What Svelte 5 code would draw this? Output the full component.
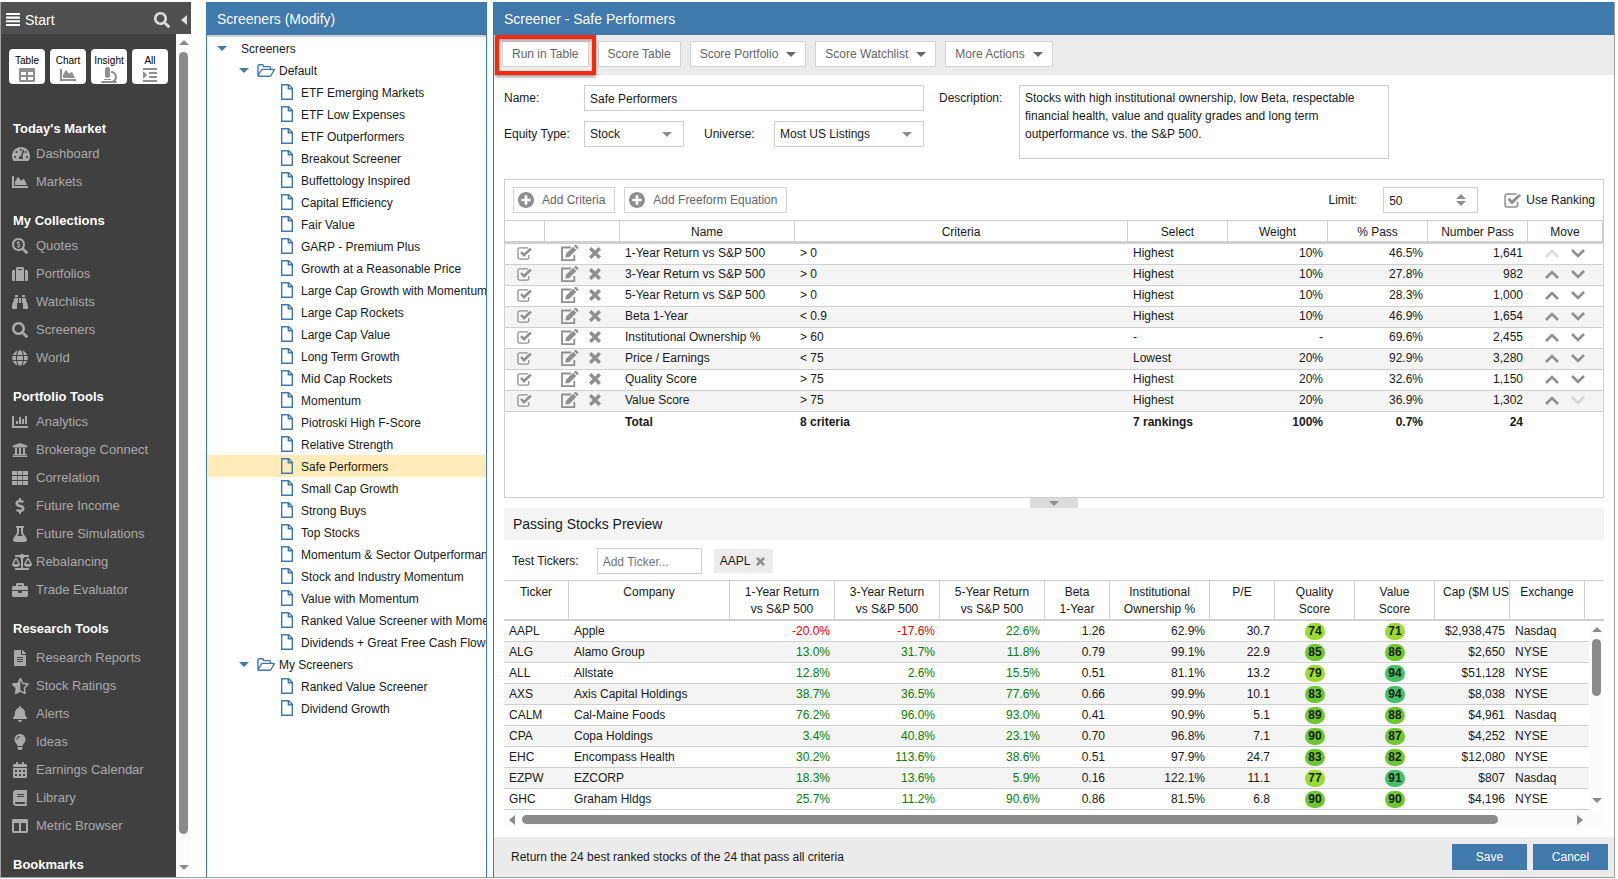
<script>
	// box is the svg viewBox, the paths are filled unless the icon has a stroke width
	const icons = {
		search: {
			box: '0 0 512 512',
			d: 'M505 442.7L405.3 343c-4.5-4.5-10.6-7-17-7H372c27.6-35.3 44-79.7 44-128C416 93.1 322.9 0 208 0S0 93.1 0 208s93.1 208 208 208c48.3 0 92.7-16.4 128-44v16.3c0 6.4 2.5 12.5 7 17l99.7 99.7c9.4 9.4 24.6 9.4 33.9 0l28.3-28.3c9.4-9.4 9.4-24.6.1-34zM208 336c-70.7 0-128-57.2-128-128 0-70.7 57.2-128 128-128 70.7 0 128 57.2 128 128 0 70.7-57.2 128-128 128z'
		},
		quotes: {
			box: '0 0 512 512',
			d: 'M505 442.7L405.3 343c-4.5-4.5-10.6-7-17-7H372c27.6-35.3 44-79.7 44-128C416 93.1 322.9 0 208 0S0 93.1 0 208s93.1 208 208 208c48.3 0 92.7-16.4 128-44v16.3c0 6.4 2.5 12.5 7 17l99.7 99.7c9.4 9.4 24.6 9.4 33.9 0l28.3-28.3c9.4-9.4 9.4-24.6.1-34zM208 352c-79.5 0-144-64.5-144-144S128.5 64 208 64s144 64.5 144 144-64.5 144-144 144zM192 96h32v26c14 1 28 6 39 15l-20 26c-9-7-18-10-28-10h-14c-18 0-22 22-4 28l36 11c50 16 46 88-9 98v28h-32v-28c-17-1-32-7-44-17l21-27c9 8 20 12 31 12h15c20 0 24-23 5-29l-37-11c-47-15-42-86 9-95z'
		},
		table: {
			box: '0 0 512 512',
			d: 'M464 32H48C21.49 32 0 53.49 0 80v352c0 26.51 21.49 48 48 48h416c26.51 0 48-21.49 48-48V80c0-26.51-21.49-48-48-48zM224 416H64v-96h160v96zm0-160H64v-96h160v96zm224 160H288v-96h160v96zm0-160H288v-96h160v96z'
		},
		area: {
			box: '0 0 512 512',
			d: 'M500 384c6.6 0 12 5.4 12 12v40c0 6.6-5.4 12-12 12H12c-6.6 0-12-5.4-12-12V76c0-6.6 5.4-12 12-12h40c6.6 0 12 5.4 12 12v308h436zM372.7 159.5L288 216l-85.3-113.7c-5.1-6.8-15.5-6.3-19.9 1L96 248v104h384l-89.9-187.8c-3.2-6.5-11.4-8.7-17.4-4.7z'
		},
		microscope: {
			box: '0 0 512 512',
			d: 'M160 320h12v16c0 8.84 7.16 16 16 16h40c8.84 0 16-7.16 16-16v-16h12c17.67 0 32-14.33 32-32V64c0-17.67-14.33-32-32-32V16c0-8.84-7.16-16-16-16h-64c-8.84 0-16 7.16-16 16v16c-17.67 0-32 14.33-32 32v224c0 17.67 14.33 32 32 32zm304 128h-1.29C493.24 413.99 512 369.2 512 320c0-105.88-86.12-192-192-192v64c70.58 0 128 57.42 128 128s-57.42 128-128 128H48c-26.51 0-48 21.49-48 48 0 8.84 7.16 16 16 16h480c8.84 0 16-7.16 16-16 0-26.51-21.49-48-48-48zm-360-32h208c4.42 0 8-3.58 8-8v-16c0-4.42-3.58-8-8-8H104c-4.42 0-8 3.58-8 8v16c0 4.42 3.58 8 8 8z'
		},
		indent: {
			box: '0 0 448 512',
			d: 'M27.31 363.3l96-96a16 16 0 0 0 0-22.62l-96-96C17.27 138.66 0 145.78 0 160v192c0 14.31 17.33 21.3 27.31 11.3zM0 416h448v64H0zM192 288h256v64H192zM192 160h256v64H192zM0 32h448v64H0z'
		},
		dashboard: {
			box: '0 0 576 512',
			d: 'M288 32C128.94 32 0 160.94 0 320c0 52.8 14.25 102.26 39.06 144.8 5.61 9.62 16.3 15.2 27.44 15.2h443c11.14 0 21.83-5.58 27.44-15.2C561.75 422.26 576 372.8 576 320c0-159.06-128.94-288-288-288zm0 64c14.71 0 26.58 10.13 30.32 23.65-1.11 2.26-2.64 4.23-3.45 6.67l-9.22 27.67c-5.13 3.49-10.97 6.01-17.64 6.01-17.67 0-32-14.33-32-32S270.33 96 288 96zM96 384c-17.67 0-32-14.33-32-32s14.33-32 32-32 32 14.33 32 32-14.33 32-32 32zm48-160c-17.67 0-32-14.33-32-32s14.33-32 32-32 32 14.33 32 32-14.33 32-32 32zm246.77-72.41l-61.33 184C343.13 347.33 352 364.54 352 384c0 11.72-3.38 22.55-8.88 32H232.88c-5.5-9.45-8.88-20.28-8.88-32 0-33.94 26.5-61.43 59.9-63.59l61.34-184.01c4.17-12.56 17.73-19.45 30.36-15.17 12.57 4.19 19.35 17.79 15.17 30.36zm14.66 57.2l15.52-46.55c3.47-1.29 7.13-2.23 11.05-2.23 17.67 0 32 14.33 32 32s-14.33 32-32 32c-11.38-.01-20.89-6.28-26.57-15.22zM480 384c-17.67 0-32-14.33-32-32s14.33-32 32-32 32 14.33 32 32-14.33 32-32 32z'
		},
		suitcase: {
			box: '0 0 512 512',
			d: 'M128 480h256V80c0-26.5-21.5-48-48-48H176c-26.5 0-48 21.5-48 48v400zm64-384h128v32H192V96zm320 80v256c0 26.5-21.5 48-48 48h-48V128h48c26.5 0 48 21.5 48 48zM96 480H48c-26.5 0-48-21.5-48-48V176c0-26.5 21.5-48 48-48h48v352z'
		},
		binoculars: {
			box: '0 0 512 512',
			d: 'M416 48c0-8.84-7.16-16-16-16h-64c-8.84 0-16 7.16-16 16v48h96V48zM63.91 159.99C61.4 253.84 3.46 274.22 0 404v44c0 17.67 14.33 32 32 32h96c17.67 0 32-14.33 32-32V288h32V128H95.84c-17.63 0-31.45 14.37-31.93 31.99zm384.18 0c-.48-17.62-14.3-31.99-31.93-31.99H320v160h32v160c0 17.67 14.33 32 32 32h96c17.67 0 32-14.33 32-32v-44c-3.46-129.78-61.4-150.16-63.91-244.01zM176 32h-64c-8.84 0-16 7.16-16 16v48h96V48c0-8.84-7.16-16-16-16zm48 256h64V128h-64v160z'
		},
		globe: {
			box: '0 0 496 512',
			d: 'M336.5 160C322 70.7 287.8 8 248 8s-74 62.7-88.5 152h177zM152 256c0 22.2 1.2 43.5 3.3 64h185.3c2.1-20.5 3.3-41.8 3.3-64s-1.2-43.5-3.3-64H155.3c-2.1 20.5-3.3 41.8-3.3 64zm324.7-96c-28.6-67.9-86.5-120.4-158-141.6 24.4 33.8 41.2 84.7 50 141.6h108zM177.2 18.4C105.8 39.6 47.8 92.1 19.3 160h108c8.7-56.9 25.5-107.8 49.9-141.6zM487.4 192H372.7c2.1 21 3.3 42.5 3.3 64s-1.2 43-3.3 64h114.6c5.5-20.5 8.6-41.8 8.6-64s-3.1-43.5-8.5-64zM120 256c0-21.5 1.2-43 3.3-64H8.6C3.2 212.5 0 233.8 0 256s3.2 43.5 8.6 64h114.6c-2-21-3.2-42.5-3.2-64zm39.5 96c14.5 89.3 48.7 152 88.5 152s74-62.7 88.5-152h-177zm159.3 141.6c71.4-21.2 129.4-73.7 158-141.6h-108c-8.8 56.9-25.6 107.8-50 141.6zM19.3 352c28.6 67.9 86.5 120.4 158 141.6-24.4-33.8-41.2-84.7-50-141.6h-108z'
		},
		bars: {
			box: '0 0 512 512',
			d: 'M0 64h64v320h448v64H0zM128 224h64v96h-64zM224 96h64v224h-64zM320 160h64v160h-64zM416 64h64v256h-64z'
		},
		bank: {
			box: '0 0 512 512',
			d: 'M496 128v16a8 8 0 0 1-8 8h-24v12c0 6.627-5.373 12-12 12H60c-6.627 0-12-5.373-12-12v-12H24a8 8 0 0 1-8-8v-16a8 8 0 0 1 4.941-7.392l232-88a7.996 7.996 0 0 1 6.118 0l232 88A8 8 0 0 1 496 128zm-24 304H40c-13.255 0-24 10.745-24 24v16a8 8 0 0 0 8 8h464a8 8 0 0 0 8-8v-16c0-13.255-10.745-24-24-24zM96 192v192H60c-6.627 0-12 5.373-12 12v20h416v-20c0-6.627-5.373-12-12-12h-36V192h-64v192h-64V192h-64v192h-64V192H96z'
		},
		grid: {
			box: '0 0 16 16',
			d: 'M0 1h5v4H0zM5.600 1h4.800v4H5.600zM11 1h5v4h-5zM0 6h5v4H0zM5.600 6h4.800v4H5.600zM11 6h5v4h-5zM0 11h5v4H0zM5.600 11h4.800v4H5.600zM11 11h5v4h-5z'
		},
		dollar: {
			box: '0 0 288 512',
			d: 'M209.2 233.4l-108-31.6C88.7 198.2 80 186.5 80 173.5c0-16.3 13.2-29.5 29.5-29.5h66.3c12.2 0 24.2 3.7 34.2 10.5 6.1 4.1 14.3 3.1 19.5-2l34.8-34c7.1-6.9 6.1-18.4-1.8-24.5C238 74.8 207.4 64.1 176 64V16c0-8.8-7.2-16-16-16h-32c-8.8 0-16 7.2-16 16v48h-2.5C45.8 64-5.4 118.7.5 183.6c4.2 46.1 39.4 83.6 83.8 96.6l102.5 30c12.5 3.7 21.2 15.3 21.2 28.3 0 16.3-13.2 29.5-29.5 29.5h-66.3C100 368 88 364.3 78 357.5c-6.1-4.1-14.3-3.1-19.5 2l-34.8 34c-7.1 6.9-6.1 18.4 1.8 24.5 24.5 19.2 55.1 29.9 86.5 30v48c0 8.8 7.2 16 16 16h32c8.8 0 16-7.2 16-16v-48.2c46.6-.9 90.3-28.6 105.7-72.7 21.5-61.6-14.6-124.8-72.5-141.7z'
		},
		flask: {
			box: '0 0 448 512',
			d: 'M437.2 403.5L320 215V64h8c13.3 0 24-10.7 24-24V24c0-13.3-10.7-24-24-24H120c-13.3 0-24 10.7-24 24v16c0 13.3 10.7 24 24 24h8v151L10.8 403.5C-18.5 450.6 15.3 512 70.9 512h306.2c55.7 0 89.4-61.5 60.1-108.5zM137.9 320l48.2-77.6c3.7-5.2 5.8-11.6 5.8-18.4V64h64v160c0 6.9 2.2 13.2 5.8 18.4l48.2 77.6h-172z'
		},
		scale: {
			box: '0 0 640 512',
			d: 'M256 336h-.02c0-16.18 1.34-8.73-85.05-181.51-17.65-35.29-68.19-35.36-85.87 0C-2.06 328.75.02 320.33.02 336H0c0 44.18 57.31 80 128 80s128-35.82 128-80zM128 176l72 144H56l72-144zm511.98 160c0-16.18 1.34-8.73-85.05-181.51-17.65-35.29-68.19-35.36-85.87 0-87.12 174.26-85.04 165.84-85.04 181.51H384c0 44.18 57.31 80 128 80s128-35.82 128-80h-.02zM440 320l72-144 72 144H440zm88 128H352V153.25c23.51-10.29 41.16-31.48 46.39-57.25H528c8.84 0 16-7.16 16-16V48c0-8.84-7.16-16-16-16H383.64C369.04 12.68 346.09 0 320 0s-49.04 12.68-63.64 32H112c-8.84 0-16 7.16-16 16v32c0 8.84 7.16 16 16 16h129.61c5.23 25.76 22.87 46.96 46.39 57.25V448H112c-8.84 0-16 7.16-16 16v32c0 8.84 7.16 16 16 16h416c8.84 0 16-7.16 16-16v-32c0-8.84-7.16-16-16-16z'
		},
		briefcase: {
			box: '0 0 512 512',
			d: 'M320 336c0 8.84-7.16 16-16 16h-96c-8.84 0-16-7.16-16-16v-48H0v144c0 25.6 22.4 48 48 48h416c25.6 0 48-22.4 48-48V288H320v48zm144-208h-80V80c0-25.6-22.4-48-48-48H176c-25.6 0-48 22.4-48 48v48H48c-25.6 0-48 22.4-48 48v80h512v-80c0-25.6-22.4-48-48-48zm-144 0H192V96h128v32z'
		},
		report: {
			box: '0 0 384 512',
			d: 'M224 136V0H24C10.7 0 0 10.7 0 24v464c0 13.3 10.7 24 24 24h336c13.3 0 24-10.7 24-24V160H248c-13.2 0-24-10.8-24-24zM288 384H96v-32h192zM288 320H96v-32h192zM288 256H96v-32h192zM384 121.9v6.1H256V0h6.1c6.4 0 12.5 2.5 17 7l97.9 98c4.5 4.5 7 10.6 7 16.9z'
		},
		star: {
			box: '0 0 536 512',
			d: 'M508.55 171.51L362.18 150.2 296.77 17.81C290.89 5.98 279.42 0 267.95 0c-11.4 0-22.79 5.9-28.69 17.81l-65.43 132.38-146.38 21.29c-26.25 3.8-36.77 36.09-17.74 54.59l105.89 103-25.06 145.48C86.98 495.33 103.57 512 122.15 512c4.93 0 10-1.17 14.87-3.75l130.95-68.68 130.94 68.7c4.86 2.55 9.92 3.71 14.83 3.71 18.6 0 35.22-16.61 31.66-37.4l-25.03-145.49 105.91-102.98c19.04-18.5 8.52-50.8-17.73-54.6zm-121.74 123.2l-18.12 17.62 4.28 24.88 19.52 113.45-102.13-53.59-22.38-11.74.03-317.19 51.03 103.29 11.18 22.63 25.01 3.64 114.23 16.63-82.65 80.38z'
		},
		bell: {
			box: '0 0 448 512',
			d: 'M224 512c35.32 0 63.97-28.65 63.97-64H160.03c0 35.35 28.65 64 63.97 64zm215.39-149.71c-19.32-20.76-55.47-51.99-55.47-154.29 0-77.7-54.48-139.9-127.94-155.16V32c0-17.67-14.32-32-31.98-32s-31.98 14.33-31.98 32v20.84C118.56 68.1 64.08 130.3 64.08 208c0 102.3-36.15 133.53-55.47 154.29-6 6.45-8.66 14.16-8.61 21.71.11 16.4 12.98 32 32.1 32h383.8c19.12 0 32-15.6 32.1-32 .05-7.55-2.61-15.27-8.61-21.71z'
		},
		bulb: {
			box: '0 0 352 512',
			d: 'M96.06 454.35c.01 6.29 1.87 12.45 5.36 17.69l17.09 25.69a31.99 31.99 0 0 0 26.64 14.28h61.71a31.99 31.99 0 0 0 26.64-14.28l17.09-25.69a31.989 31.989 0 0 0 5.36-17.69l.04-38.35H96.01l.05 38.35zM0 176c0 44.37 16.45 84.85 43.56 115.78 16.52 18.85 42.36 58.23 52.21 91.45.04.26.07.52.11.78h160.24c.04-.26.07-.51.11-.78 9.85-33.22 35.69-72.6 52.21-91.45C335.55 260.85 352 220.37 352 176 352 78.61 272.91-.3 175.45 0 73.44.31 0 82.97 0 176zm176-80c-44.11 0-80 35.89-80 80 0 8.84-7.16 16-16 16s-16-7.16-16-16c0-61.76 50.24-112 112-112 8.84 0 16 7.16 16 16s-7.16 16-16 16z'
		},
		calendar: {
			box: '0 0 448 512',
			d: 'M0 464c0 26.5 21.5 48 48 48h352c26.5 0 48-21.5 48-48V192H0v272zM320 256h64v64h-64zM320 384h64v64h-64zM192 256h64v64h-64zM192 384h64v64h-64zM64 256h64v64H64zM64 384h64v64H64zM400 64h-48V16c0-8.8-7.2-16-16-16h-32c-8.8 0-16 7.2-16 16v48H160V16c0-8.8-7.2-16-16-16h-32c-8.8 0-16 7.2-16 16v48H48C21.5 64 0 85.5 0 112v48h448v-48c0-26.5-21.5-48-48-48z'
		},
		book: {
			box: '0 0 448 512',
			d: 'M448 360V24c0-13.3-10.7-24-24-24H96C43 0 0 43 0 96v320c0 53 43 96 96 96h328c13.3 0 24-10.7 24-24v-16c0-7.5-3.5-14.3-8.9-18.7-4.2-15.4-4.2-59.3 0-74.7 5.4-4.3 8.9-11.1 8.9-18.6zM128 128h224v32H128zM128 192h224v32H128zM381.4 448H96c-17.7 0-32-14.3-32-32 0-17.6 14.4-32 32-32h285.4c-1.9 17.1-1.9 46.9 0 64z'
		},
		columns: {
			box: '0 0 512 512',
			d: 'M464 32H48C21.49 32 0 53.49 0 80v352c0 26.51 21.49 48 48 48h416c26.51 0 48-21.49 48-48V80c0-26.51-21.49-48-48-48zM224 416H64V160h160v256zm224 0H288V160h160v256z'
		},
		plus: {
			box: '8 8 496 496',
			d: 'M256 8C119 8 8 119 8 256s111 248 248 248 248-111 248-248S393 8 256 8zm144 276c0 6.6-5.4 12-12 12h-92v92c0 6.6-5.4 12-12 12h-56c-6.6 0-12-5.4-12-12v-92h-92c-6.6 0-12-5.4-12-12v-56c0-6.6 5.4-12 12-12h92v-92c0-6.6 5.4-12 12-12h56c6.6 0 12 5.4 12 12v92h92c6.6 0 12 5.4 12 12v56z'
		},
		menu: { box: '0 0 14 13', d: 'M0 0h14v2H0zM0 3.6h14v2.200H0zM0 7.300h14v2H0zM0 11h14v2H0z' },
		down: { box: '0 0 10 5', d: 'M0 0h10L5 5z' },
		up: { box: '0 0 10 5', d: 'M0 5h10L5 0z' },
		left: { box: '0 0 6 10', d: 'M6 0v10L0 5z' },
		right: { box: '0 0 6 10', d: 'M0 0v10l6-5z' },
		file: { box: '0 0 12 16', stroke: 1.4, d: 'M.7.7h7l3.600 3.600v11H.7zM7.300.7v4h4' },
		folder: {
			box: '0 0 18 13',
			stroke: 1.4,
			d: 'M1 11V1.7Q1 .8 2 .8h3.5q1 0 1 1v.8h6q1 0 1 1v1.8M1.2 11.5L4.5 6q.4-.6 1.2-.6H17q.5 0 .2.5L14 11.5q-.4.7-1.2.7H1.6q-.7 0-.4-.7z'
		},
		check: {
			box: '0 0 16 14',
			stroke: 1.4,
			d: 'M12.7 8.5V11q0 2-2 2H3q-2 0-2-2V3q0-2 2-2h7.7q.7 0 1.200.3',
			fill: 'M3.400 6.200L5.100 4.500l2.400 2.300L14 .9l1.900 1.700-8.400 8.100z'
		},
		edit: {
			box: '0 0 18 16',
			stroke: 1.8,
			d: 'M10 2.5H1v12.6h12.3V10',
			fill: 'M5 8.800l7.200-7 3.200 3.200-7.200 7-3.800.6zM13 1.100l1-1q.7-.6 1.300 0l1.900 1.900q.6.6 0 1.300l-1 1z'
		},
		times: { box: '0 0 11 11', stroke: 3.2, d: 'M1.100 1.100l8.800 8.800M9.900 1.100l-8.800 8.800' },
		moveUp: { box: '0 0 14 9', stroke: 2.6, d: 'M1 8l6-6 6 6' },
		moveDown: { box: '0 0 14 9', stroke: 2.6, d: 'M1 1l6 6 6-6' }
	};

	const views = [
		['Table', 'table'],
		['Chart', 'area'],
		['Insight', 'microscope'],
		['All', 'indent']
	];

	const sections = [
		{
			title: "Today's Market",
			items: [
				['Dashboard', 'dashboard'],
				['Markets', 'area']
			]
		},
		{
			title: 'My Collections',
			items: [
				['Quotes', 'quotes'],
				['Portfolios', 'suitcase'],
				['Watchlists', 'binoculars'],
				['Screeners', 'search'],
				['World', 'globe']
			]
		},
		{
			title: 'Portfolio Tools',
			items: [
				['Analytics', 'bars'],
				['Brokerage Connect', 'bank'],
				['Correlation', 'grid'],
				['Future Income', 'dollar'],
				['Future Simulations', 'flask'],
				['Rebalancing', 'scale'],
				['Trade Evaluator', 'briefcase']
			]
		},
		{
			title: 'Research Tools',
			spaced: true,
			items: [
				['Research Reports', 'report'],
				['Stock Ratings', 'star'],
				['Alerts', 'bell'],
				['Ideas', 'bulb'],
				['Earnings Calendar', 'calendar'],
				['Library', 'book'],
				['Metric Browser', 'columns']
			]
		},
		{ title: 'Bookmarks', items: [] }
	];

	const folders = [
		{
			name: 'Default',
			screeners: [
				'ETF Emerging Markets',
				'ETF Low Expenses',
				'ETF Outperformers',
				'Breakout Screener',
				'Buffettology Inspired',
				'Capital Efficiency',
				'Fair Value',
				'GARP - Premium Plus',
				'Growth at a Reasonable Price',
				'Large Cap Growth with Momentum',
				'Large Cap Rockets',
				'Large Cap Value',
				'Long Term Growth',
				'Mid Cap Rockets',
				'Momentum',
				'Piotroski High F-Score',
				'Relative Strength',
				'Safe Performers',
				'Small Cap Growth',
				'Strong Buys',
				'Top Stocks',
				'Momentum & Sector Outperformance',
				'Stock and Industry Momentum',
				'Value with Momentum',
				'Ranked Value Screener with Momentum',
				'Dividends + Great Free Cash Flow'
			]
		},
		{ name: 'My Screeners', screeners: ['Ranked Value Screener', 'Dividend Growth'] }
	];

	// name, criteria, select, weight, % pass, number pass
	const criteria = [
		['1-Year Return vs S&P 500', '> 0', 'Highest', '10%', '46.5%', '1,641'],
		['3-Year Return vs S&P 500', '> 0', 'Highest', '10%', '27.8%', '982'],
		['5-Year Return vs S&P 500', '> 0', 'Highest', '10%', '28.3%', '1,000'],
		['Beta 1-Year', '< 0.9', 'Highest', '10%', '46.9%', '1,654'],
		['Institutional Ownership %', '> 60', '-', '-', '69.6%', '2,455'],
		['Price / Earnings', '< 75', 'Lowest', '20%', '92.9%', '3,280'],
		['Quality Score', '> 75', 'Highest', '20%', '32.6%', '1,150'],
		['Value Score', '> 75', 'Highest', '20%', '36.9%', '1,302']
	];

	// ticker, company, 1/3/5 year returns, beta, inst. ownership, p/e, quality, value, cap, exchange
	const stocks = [
		['AAPL', 'Apple', '-20.0%', '-17.6%', '22.6%', '1.26', '62.9%', '30.7', 74, 71, '$2,938,475', 'Nasdaq'],
		['ALG', 'Alamo Group', '13.0%', '31.7%', '11.8%', '0.79', '99.1%', '22.9', 85, 86, '$2,650', 'NYSE'],
		['ALL', 'Allstate', '12.8%', '2.6%', '15.5%', '0.51', '81.1%', '13.2', 79, 94, '$51,128', 'NYSE'],
		['AXS', 'Axis Capital Holdings', '38.7%', '36.5%', '77.6%', '0.66', '99.9%', '10.1', 83, 94, '$8,038', 'NYSE'],
		['CALM', 'Cal-Maine Foods', '76.2%', '96.0%', '93.0%', '0.41', '90.9%', '5.1', 89, 88, '$4,961', 'Nasdaq'],
		['CPA', 'Copa Holdings', '3.4%', '40.8%', '23.1%', '0.70', '96.8%', '7.1', 90, 87, '$4,252', 'NYSE'],
		['EHC', 'Encompass Health', '30.2%', '113.6%', '38.6%', '0.51', '97.9%', '24.7', 83, 82, '$12,080', 'NYSE'],
		['EZPW', 'EZCORP', '18.3%', '13.6%', '5.9%', '0.16', '122.1%', '11.1', 77, 91, '$807', 'Nasdaq'],
		['GHC', 'Graham Hldgs', '25.7%', '11.2%', '90.6%', '0.86', '81.5%', '6.8', 90, 90, '$4,196', 'NYSE']
	];

	const stockColumns = [
		['Ticker'],
		['Company'],
		['1-Year Return', 'vs S&P 500'],
		['3-Year Return', 'vs S&P 500'],
		['5-Year Return', 'vs S&P 500'],
		['Beta', '1-Year'],
		['Institutional', 'Ownership %'],
		['P/E'],
		['Quality', 'Score'],
		['Value', 'Score'],
		['Cap ($M USD)'],
		['Exchange']
	];

	let selected = $state('Safe Performers');
	let name = $state('Safe Performers');
	let equityType = $state('Stock');
	let universe = $state('Most US Listings');
	let limit = $state(50);
	let useRanking = $state(true);
	let description = $state(
		'Stocks with high institutional ownership, low Beta, respectable financial health, value and quality grades and long term outperformance vs. the S&P 500.'
	);

	function grade(score) {
		if (score > 90) return 'high';
		return score < 80 ? 'low' : 'mid';
	}
</script>

{#snippet icon(id, height)}
	{@const shape = icons[id]}
	<svg class="icon" viewBox={shape.box} {height} aria-hidden="true">
		{#if shape.stroke}
			<path d={shape.d} fill="none" stroke="currentColor" stroke-width={shape.stroke} />
			{#if shape.fill}<path d={shape.fill} fill="currentColor" />{/if}
		{:else}
			<path d={shape.d} fill="currentColor" fill-rule="evenodd" />
		{/if}
	</svg>
{/snippet}

<div class="page">
	<div class="frame">
		<aside class="sidebar">
			<header class="start">
				{@render icon('menu', 13)}
				<span class="grow">Start</span>
				<button class="plain" aria-label="Search">{@render icon('search', 16)}</button>
				<button class="plain" aria-label="Collapse menu">{@render icon('left', 10)}</button>
			</header>
			<div class="sidebar-body">
				<nav>
					<div class="views">
						{#each views as [label, glyph]}
							<button class="view">{label}{@render icon(glyph, 16)}</button>
						{/each}
					</div>
					{#each sections as section}
						<h2>{section.title}</h2>
						<ul class:spaced={section.spaced}>
							{#each section.items as [label, glyph]}
								<li>
									<a href="#{glyph}"><span class="glyph">{@render icon(glyph, 16)}</span>{label}</a>
								</li>
							{/each}
						</ul>
					{/each}
				</nav>
				<div class="scroll">
					{@render icon('up', 5)}
					<div class="thumb"></div>
					{@render icon('down', 5)}
				</div>
			</div>
		</aside>

		<section class="tree">
			<h1>Screeners (Modify)</h1>
			<div class="tree-body">
				<button class="node root">{@render icon('down', 5)}<span>Screeners</span></button>
				{#each folders as folder}
					<button class="node folder">
						{@render icon('down', 5)}
						{@render icon('folder', 13)}
						<span>{folder.name}</span>
					</button>
					{#each folder.screeners as screener}
						<button
							class="node leaf"
							class:selected={screener === selected}
							onclick={() => (selected = screener)}
						>
							{@render icon('file', 16)}
							<span>{screener}</span>
						</button>
					{/each}
				{/each}
			</div>
		</section>

		<main>
			<h1>Screener - Safe Performers</h1>
			<div class="toolbar">
				<div class="callout"><button class="btn">Run in Table</button></div>
				<button class="btn">Score Table</button>
				<button class="btn">Score Portfolio {@render icon('down', 5)}</button>
				<button class="btn">Score Watchlist {@render icon('down', 5)}</button>
				<button class="btn">More Actions {@render icon('down', 5)}</button>
			</div>

			<form class="details">
				<label for="name">Name:</label>
				<input id="name" class="field name" type="text" bind:value={name} />
				<label class="desc-label" for="description">Description:</label>
				<textarea id="description" class="field" bind:value={description}></textarea>
				<label for="equity">Equity Type:</label>
				<div class="picker">
					<select id="equity" class="field" bind:value={equityType}>
						<option>Stock</option>
						<option>ETF</option>
					</select>
					{@render icon('down', 5)}
				</div>
				<label class="universe" for="universe">Universe:</label>
				<div class="picker">
					<select id="universe" class="field" bind:value={universe}>
						<option>Most US Listings</option>
						<option>All Listings</option>
					</select>
					{@render icon('down', 5)}
				</div>
			</form>

			<section class="criteria">
				<div class="criteria-bar">
					<button class="btn add">{@render icon('plus', 16)}Add Criteria</button>
					<button class="btn add">{@render icon('plus', 16)}Add Freeform Equation</button>
					<span class="grow"></span>
					<label for="limit">Limit:</label>
					<div class="limit">
						<input id="limit" class="field" type="number" bind:value={limit} />
						<span class="spin">{@render icon('up', 5)}{@render icon('down', 5)}</span>
					</div>
					<label class="ranking">
						<span class="tick">
							<input type="checkbox" bind:checked={useRanking} />
							{@render icon('check', 15)}
						</span>
						Use Ranking
					</label>
				</div>
				<table>
					<colgroup>
						<col class="w40" />
						<col class="w75" />
						<col class="w175" />
						<col />
						<col class="w100" />
						<col class="w100" />
						<col class="w100" />
						<col class="w100" />
						<col class="w75" />
					</colgroup>
					<thead>
						<tr>
							<th></th>
							<th></th>
							<th>Name</th>
							<th>Criteria</th>
							<th>Select</th>
							<th>Weight</th>
							<th>% Pass</th>
							<th>Number Pass</th>
							<th>Move</th>
						</tr>
					</thead>
					<tbody>
						{#each criteria as row, i}
							<tr>
								<td>
									<span class="tick">
										<input type="checkbox" checked aria-label="Use {row[0]}" />
										{@render icon('check', 13)}
									</span>
								</td>
								<td>
									<div class="actions">
										<button class="plain" aria-label="Edit">{@render icon('edit', 16)}</button>
										<button class="plain" aria-label="Remove">{@render icon('times', 12)}</button>
									</div>
								</td>
								<td>{row[0]}</td>
								<td>{row[1]}</td>
								<td>{row[2]}</td>
								<td class="num">{row[3]}</td>
								<td class="num">{row[4]}</td>
								<td class="num">{row[5]}</td>
								<td>
									<div class="moves">
										<button class="plain" disabled={i === 0} aria-label="Move up">
											{@render icon('moveUp', 9)}
										</button>
										<button class="plain" disabled={i === criteria.length - 1} aria-label="Move down">
											{@render icon('moveDown', 9)}
										</button>
									</div>
								</td>
							</tr>
						{/each}
					</tbody>
					<tfoot>
						<tr>
							<td></td>
							<td></td>
							<td>Total</td>
							<td>8 criteria</td>
							<td>7 rankings</td>
							<td class="num">100%</td>
							<td class="num">0.7%</td>
							<td class="num">24</td>
							<td></td>
						</tr>
					</tfoot>
				</table>
			</section>
			<button class="handle" aria-label="Collapse preview">{@render icon('down', 5)}</button>

			<section class="preview">
				<h2>Passing Stocks Preview</h2>
				<div class="tickers">
					<label for="ticker">Test Tickers:</label>
					<input id="ticker" class="field" type="text" placeholder="Add Ticker..." />
					<span class="chip">
						AAPL
						<button class="plain" aria-label="Remove AAPL">{@render icon('times', 9)}</button>
					</span>
				</div>
				<div class="stocks">
					<table>
						<colgroup>
							<col class="w65" />
							<col />
							<col class="w105" />
							<col class="w105" />
							<col class="w105" />
							<col class="w65" />
							<col class="w100" />
							<col class="w65" />
							<col class="w80" />
							<col class="w80" />
							<col class="w75" />
							<col class="w75" />
							<col class="w19" />
						</colgroup>
						<thead>
							<tr>
								{#each stockColumns as [first, second]}
									<th>{first}{#if second}<br />{second}{/if}</th>
								{/each}
								<th></th>
							</tr>
						</thead>
						<tbody>
							{#each stocks as stock}
								<tr>
									{#each stock as value, i}
										{#if i === 8 || i === 9}
											<td><span class="score {grade(value)}">{value}</span></td>
										{:else if i > 1 && i < 5}
											<td class="num gain" class:loss={value.startsWith('-')}>{value}</td>
										{:else}
											<td class:num={i > 4 && i < 11}>{value}</td>
										{/if}
									{/each}
									<td></td>
								</tr>
							{/each}
						</tbody>
					</table>
					<div class="scroll stock-scroll">
						{@render icon('up', 5)}
						<div class="thumb"></div>
						{@render icon('down', 5)}
					</div>
				</div>
				<div class="scroll across">
					{@render icon('left', 10)}
					<div class="thumb"></div>
					{@render icon('right', 10)}
				</div>
			</section>

			<footer>
				<span class="grow">Return the 24 best ranked stocks of the 24 that pass all criteria</span>
				<button class="primary">Save</button>
				<button class="primary">Cancel</button>
			</footer>
		</main>
	</div>
</div>

<style>
	:global(body) {
		background: #fff;
	}
	.page {
		--blue: #4079ac;
		--line: #d0d0d0;
		--grey: #8f8f8f;
		box-sizing: border-box;
		height: 100vh;
		padding: 2px 3px 1px 0;
		font: 12px/18px 'Liberation Sans', Arial, sans-serif;
		color: #1a1a1a;
	}
	.page :global(*) {
		box-sizing: border-box;
	}
	.frame {
		display: flex;
		height: 100%;
		border: 1px solid #a0a0a0;
		border-top: 0;
	}
	h1,
	h2,
	ul {
		margin: 0;
		padding: 0;
		list-style: none;
	}
	button,
	input,
	select,
	textarea {
		font: inherit;
		color: inherit;
		margin: 0;
	}
	.icon {
		display: block;
		flex: none;
	}
	.plain {
		display: block;
		padding: 0;
		border: 0;
		background: none;
	}
	.grow {
		flex: 1;
	}

	/* left menu */
	.sidebar {
		display: flex;
		flex-direction: column;
		flex: none;
		width: 190px;
		margin-right: 15px;
	}
	.start {
		display: flex;
		align-items: center;
		flex: none;
		gap: 5px;
		height: 32px;
		padding: 3px 4px 0 5px;
		background: #505050;
		color: #fff;
		font-size: 14px;
	}
	.start .plain {
		color: #ddd;
	}
	.start .plain:last-child {
		margin-left: 6px;
	}
	.sidebar-body {
		display: flex;
		flex: 1;
		min-height: 0;
	}
	nav {
		flex: 1;
		overflow: hidden;
		background: #404040;
	}
	.views {
		display: flex;
		gap: 5px;
		padding: 15px 8px 20px;
	}
	.view {
		display: flex;
		flex-direction: column;
		align-items: center;
		width: 36px;
		height: 35px;
		padding: 6px 0 0;
		border: 0;
		border-radius: 4px;
		background: #fff;
		color: #000;
		font-size: 10px;
		line-height: 12px;
	}
	.view .icon {
		color: var(--grey);
	}
	nav h2 {
		margin-top: 14px;
		padding-left: 12px;
		color: #fff;
		font-size: 13px;
		line-height: 22px;
	}
	.spaced {
		padding-top: 4px;
	}
	nav a {
		display: flex;
		align-items: center;
		padding-left: 11px;
		color: #aaa;
		font-size: 13px;
		line-height: 28px;
		text-decoration: none;
	}
	.glyph {
		width: 24px;
	}
	.glyph .icon {
		min-width: 16px;
	}
	.scroll {
		display: flex;
		flex-direction: column;
		align-items: center;
		flex: none;
		gap: 7px;
		width: 15px;
		padding: 6px 0 7px;
		background: #fcfcfc;
		color: #8b8b8b;
	}
	.thumb {
		flex: 1;
		width: 9px;
		margin-bottom: 24px;
		border-radius: 5px;
		background: #8b8b8b;
	}

	/* screener tree */
	h1 {
		flex: none;
		height: 33px;
		padding-left: 11px;
		background: var(--blue);
		color: #fff;
		font-size: 14px;
		font-weight: normal;
		line-height: 34px;
	}
	.tree {
		display: flex;
		flex-direction: column;
		flex: none;
		width: 281px;
		margin-right: 6px;
	}
	.tree-body {
		flex: 1;
		overflow: hidden;
		border: solid var(--blue);
		border-width: 0 1px;
	}
	.tree-body::before {
		content: '';
		display: block;
		height: 2px;
		background: var(--line);
	}
	.node {
		display: flex;
		align-items: center;
		width: 100%;
		height: 22px;
		border: 0;
		background: none;
		text-align: left;
		white-space: nowrap;
	}
	.node .icon {
		color: var(--blue);
	}
	.node span {
		padding-top: 2px;
	}
	.root {
		gap: 14px;
		padding: 0 0 0 10px;
	}
	.folder {
		gap: 8px;
		padding: 0 0 0 32px;
	}
	.folder span {
		margin-left: -4px;
	}
	.leaf {
		gap: 8px;
		padding: 0 0 0 74px;
	}
	.selected {
		background: #ffecb8;
	}

	/* screener editor */
	main {
		display: flex;
		flex-direction: column;
		flex: 1;
		min-width: 0;
		border-left: 1px solid var(--blue);
	}
	main h1 {
		padding-left: 10px;
	}
	.toolbar {
		display: flex;
		flex: none;
		gap: 9px;
		height: 40px;
		padding: 6px 8px;
		background: #ececec;
	}
	.btn {
		display: flex;
		align-items: center;
		gap: 8px;
		height: 26px;
		padding: 0 9px;
		border: 1px solid #d4d4d4;
		background: #fff;
		color: #666;
		white-space: nowrap;
	}
	.callout {
		position: relative;
	}
	.callout::after {
		content: '';
		position: absolute;
		inset: -6px -7px;
		border: 4px solid #f6290c;
		box-shadow:
			0 2px 3px rgba(0, 0, 0, 0.4),
			inset 0 2px 3px rgba(0, 0, 0, 0.3);
		pointer-events: none;
	}
	.details {
		display: grid;
		grid-template-columns: 80px 100px 90px 150px 95px minmax(200px, 370px);
		grid-template-rows: 26px 26px;
		gap: 10px 0;
		margin: 10px 10px 32px;
		line-height: 26px;
	}
	.field {
		width: 100%;
		height: 26px;
		padding: 2px 5px 0;
		border: 1px solid var(--line);
		border-radius: 0;
		outline: 0;
		background: #fff;
	}
	.name {
		grid-column: 2 / 5;
	}
	.desc-label {
		padding-left: 15px;
	}
	textarea.field {
		grid-column: 6;
		grid-row: 1 / 3;
		height: 74px;
		padding-top: 3px;
		line-height: 18px;
		resize: none;
	}
	.universe {
		padding-left: 20px;
	}
	.picker,
	.limit,
	.tick {
		display: grid;
		align-items: center;
	}
	.picker > *,
	.limit > *,
	.tick > * {
		grid-area: 1 / 1;
	}
	.picker :global(.icon),
	.spin {
		justify-self: end;
		margin-right: 12px;
		color: var(--grey);
		pointer-events: none;
	}
	select.field {
		appearance: none;
		padding-top: 0;
		line-height: 24px;
	}

	.criteria {
		flex: 1;
		min-height: 0;
		margin: 0 10px;
		border: 1px solid var(--line);
	}
	.criteria-bar {
		display: flex;
		align-items: center;
		height: 40px;
		padding: 0 8px;
	}
	.add {
		margin-right: 9px;
		padding-left: 4px;
	}
	.add .icon,
	.tick,
	.plain {
		color: var(--grey);
	}
	.limit {
		width: 95px;
		margin: 0 26px;
	}
	.spin {
		display: grid;
		gap: 2px;
	}
	.spin .icon {
		margin: 0;
	}
	input[type='number'] {
		appearance: textfield;
	}
	input[type='checkbox'] {
		appearance: none;
		width: 15px;
		height: 13px;
	}
	.ranking {
		display: flex;
		align-items: center;
		gap: 5px;
	}

	table {
		width: 100%;
		table-layout: fixed;
		border-collapse: separate;
		border-spacing: 0;
	}
	.w19 {
		width: 19px;
	}
	.w40 {
		width: 40px;
	}
	.w65 {
		width: 65px;
	}
	.w75 {
		width: 75px;
	}
	.w80 {
		width: 80px;
	}
	.w100 {
		width: 100px;
	}
	.w105 {
		width: 105px;
	}
	.w175 {
		width: 175px;
	}
	th {
		height: 24px;
		padding: 2px 0 0;
		border: solid var(--line);
		border-width: 1px 1px 3px 0;
		font-weight: normal;
		line-height: 18px;
	}
	td {
		height: 21px;
		padding: 0 5px;
		border-bottom: 1px solid var(--line);
		line-height: 20px;
		white-space: nowrap;
	}
	.criteria td {
		padding-bottom: 2px;
		line-height: 18px;
	}
	tbody tr:nth-child(even) {
		background: #f4f4f4;
	}
	.criteria tfoot td {
		border: 0;
		font-weight: bold;
	}
	.num {
		text-align: right;
	}
	td .tick {
		padding-left: 7px;
	}
	.actions {
		display: flex;
		align-items: center;
		gap: 10px;
		padding-left: 11px;
	}
	.moves {
		display: flex;
		gap: 12px;
		padding-left: 12px;
	}
	.plain:disabled {
		opacity: 0.3;
	}
	.handle {
		display: flex;
		align-items: center;
		justify-content: center;
		flex: none;
		align-self: center;
		width: 48px;
		height: 10px;
		padding: 0;
		border: 0;
		background: #dcdcdc;
		color: var(--grey);
	}

	/* preview */
	.preview {
		flex: none;
		margin: 0 10px 10px;
	}
	.preview h2 {
		padding-left: 9px;
		background: #f4f4f4;
		font-size: 14px;
		font-weight: normal;
		line-height: 32px;
	}
	.tickers {
		display: flex;
		align-items: center;
		height: 40px;
		padding: 2px 8px 0;
	}
	.tickers .field {
		width: 105px;
		margin: 0 12px 0 18px;
	}
	.tickers .field::placeholder {
		color: #757575;
	}
	.chip {
		display: flex;
		align-items: center;
		gap: 6px;
		height: 24px;
		padding: 0 8px 0 6px;
		background: #ececec;
	}
	.stocks {
		display: grid;
		padding-bottom: 2px;
	}
	.stocks > * {
		grid-area: 1 / 1;
	}
	.stocks th {
		height: 41px;
		padding-top: 3px;
		border-bottom-width: 2px;
		line-height: 17px;
		vertical-align: top;
	}
	.stocks th:nth-child(11) {
		padding-left: 8px;
		overflow: hidden;
		text-align: left;
		white-space: nowrap;
	}
	.stocks th:last-child {
		border-right: 0;
	}
	.gain {
		color: #0a7d0a;
	}
	.loss {
		color: #e00000;
	}
	.score {
		display: block;
		width: 20px;
		height: 17px;
		margin: 0 auto;
		border-radius: 9px;
		font-weight: bold;
		line-height: 17px;
		text-align: center;
	}
	.low {
		background: #9bdb2f;
	}
	.mid {
		background: #6bc92f;
	}
	.high {
		background: #44c068;
	}
	.stock-scroll {
		justify-self: end;
		margin-top: 41px;
	}
	.stock-scroll .thumb {
		flex: 0 0 57px;
		margin-bottom: auto;
	}
	.across {
		flex-direction: row;
		width: 100%;
		height: 15px;
		padding: 0 21px 0 5px;
	}
	.across .thumb {
		height: 9px;
		margin: 0 72px 0 0;
	}

	footer {
		display: flex;
		align-items: center;
		flex: none;
		gap: 6px;
		height: 40px;
		padding: 0 6px 0 17px;
		background: #ebebeb;
	}
	.primary {
		width: 75px;
		height: 26px;
		padding: 0;
		border: 0;
		background: var(--blue);
		color: #fff;
	}
</style>
